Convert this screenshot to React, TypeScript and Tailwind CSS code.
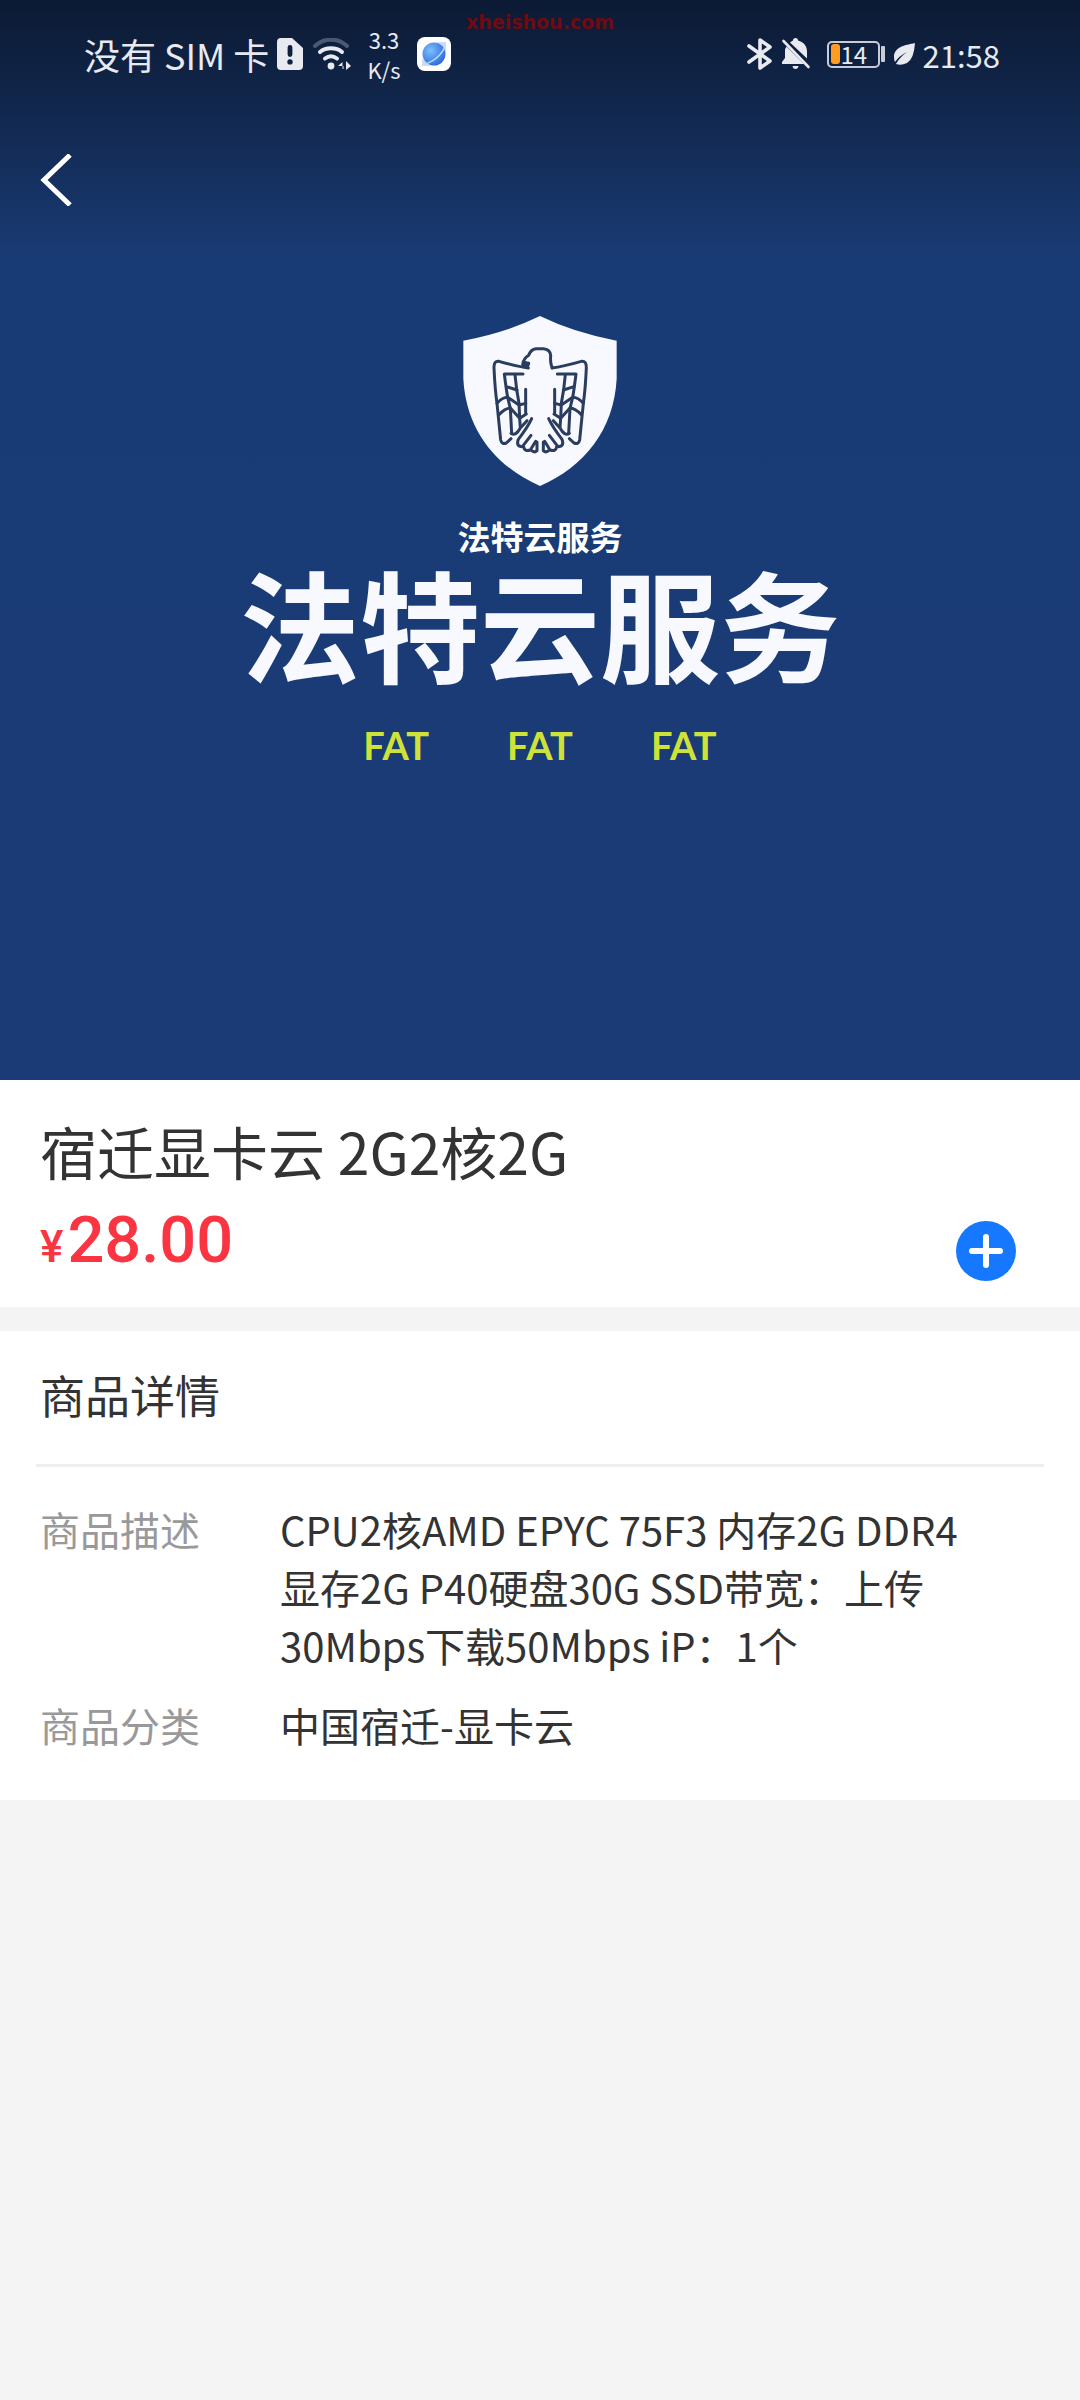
import { useState } from 'react';

const details = [
  { label: '商品描述', value: 'CPU2核AMD EPYC 75F3 内存2G DDR4 显存2G P40硬盘30G SSD带宽：上传30Mbps下载50Mbps iP：1个' },
  { label: '商品分类', value: '中国宿迁-显卡云' },
];

function SimIcon() {
  return (
    <svg className="h-8 w-[26px]" viewBox="0 0 26 32" fill="#e8eaf0">
      <path fillRule="evenodd" d="M4 0h11l11 10v18a4 4 0 0 1-4 4H4a4 4 0 0 1-4-4V4a4 4 0 0 1 4-4ZM13 7a2.4 2.4 0 0 0-2.4 2.4v7.200a2.400 2.400 0 0 0 4.800 0V9.400A2.400 2.400 0 0 0 13 7Zm0 14.200a2.700 2.700 0 1 0 0 5.400 2.700 2.700 0 0 0 0-5.400Z" />
    </svg>
  );
}

function WifiIcon() {
  return (
    <svg className="h-8 w-[38px]" viewBox="0 0 38 32" fill="none" strokeWidth="4" strokeLinecap="round">
      <path d="M2 8C11-.5 25-.5 34 8" stroke="#4b5875" />
      <path d="M7 14c6-5 16-5 22 0M12 20.500c4-3 8-3 12 0" stroke="#e8eaf0" />
      <circle cx="18" cy="28" r="3.400" fill="#e8eaf0" />
      <path d="M25 28l4.500-4v7h1v-3H25ZM33 23l5 5-5 4Z" fill="#e8eaf0" />
    </svg>
  );
}

function BrowserIcon() {
  return (
    <svg className="h-[34px] w-[34px]" viewBox="0 0 34 34">
      <defs>
        <radialGradient id="planet" cx=".35" cy=".35" r=".75">
          <stop offset="0" stopColor="#7cc0fb" />
          <stop offset="1" stopColor="#2764dc" />
        </radialGradient>
      </defs>
      <rect width="34" height="34" rx="8" fill="#fff" />
      <path d="M20 5h9v9ZM5 21v8h8Z" fill="#cfdcf8" />
      <circle cx="17" cy="17" r="11.500" fill="url(#planet)" />
      <path d="M28 7c0 7-9 17-20 20" fill="none" stroke="#b9dcff" strokeWidth="1.500" />
    </svg>
  );
}

function BluetoothIcon() {
  return (
    <svg className="h-8 w-[26px]" viewBox="0 0 26 32" fill="none" stroke="#e8eaf0" strokeWidth="3.600" strokeLinecap="round" strokeLinejoin="round">
      <path d="M2 8l21 15-10 7V2l10 7L2 24" />
    </svg>
  );
}

function MutedIcon() {
  return (
    <svg className="h-8 w-[30px]" viewBox="0 0 30 32" fill="#e8eaf0">
      <path d="M12 2.500a2.500 2.500 0 0 1 5 0c6 1.500 9 6 9 11v7L9 4.500q1.300-1.200 3-2ZM5.500 8.500L23 26H1v-2l3-4v-7q0-2.500 1.500-4.500ZM11.500 28h6q-.5 3-3 3t-3-3Z" />
      <path d="M2.500 3l25 26" stroke="#e8eaf0" strokeWidth="2.600" strokeLinecap="round" />
    </svg>
  );
}

function LeafIcon() {
  return (
    <svg className="h-6 w-[22px]" viewBox="0 0 22 24">
      <path d="M22 1C12 3 1 5 1 15q0 3 1 5Q6 14 14 10 7 15 3 22 8 24 14 21 21 17 22 1Z" fill="#e8eaf0" />
    </svg>
  );
}

function Battery() {
  return (
    <div className="flex items-center gap-px">
      <div className="flex h-[27px] w-[53px] items-center gap-px rounded-[5px] border-2 border-[#c9ccd5] px-0.5 text-2xl leading-none">
        <span className="h-5 w-[9px] shrink-0 rounded-[3px] bg-[#ff9d23]" />
        <span>14</span>
      </div>
      <span className="h-4 w-1 rounded-[1px] bg-[#c9ccd5]" />
    </div>
  );
}

function StatusBar() {
  return (
    <div className="flex h-[108px] items-center justify-between pr-20 pl-[84px] text-[#e8eaf0]">
      <div className="flex items-center">
        <span className="text-[36px] leading-none">没有 SIM 卡</span>
        <span className="ml-2 flex items-center gap-[10px]">
          <SimIcon />
          <WifiIcon />
        </span>
        <span className="mx-4 flex flex-col items-center text-[22px] leading-[30px]">
          <span>3.3</span>
          <span>K/s</span>
        </span>
        <BrowserIcon />
      </div>
      <div className="flex items-center gap-2">
        <BluetoothIcon />
        <MutedIcon />
        <span className="ml-2">
          <Battery />
        </span>
        <LeafIcon />
        <span className="text-[31px] leading-none">21:58</span>
      </div>
    </div>
  );
}

// One half of the eagle, drawn twice and mirrored
function Wing() {
  return (
    <g transform="translate(135 120)">
      <path d="M128 84Q96 80 40 64Q24 62 25 84Q28 150 34 190L45 300Q48 314 62 309L76 296" />
      <path d="M112 102H56Q62 150 66 172L74 205L78 280M88 104Q92 150 100 190L102 235L104 262M120 148V218" />
      <path d="M62 140L94 150M34 190Q50 172 66 172L100 195L120 190M40 224Q58 205 74 204L102 235L122 222" />
      <path d="M76 280Q90 290 104 264L124 242" />
      <path d="M138 236Q126 262 98 298Q90 320 110 320L136 286M114 320Q116 336 134 330L150 304M136 330Q146 340 154 332V306" />
    </g>
  );
}

function ShieldLogo() {
  return (
    <svg className="h-[170px] w-[154px]" viewBox="67 48 462 510" role="img" aria-label="法特云服务">
      <path d="M298 48Q400 98 528 122V236C520 390 430 500 298 558C166 500 76 390 68 236V122Q196 98 298 48Z" fill="#f7f9ff" />
      <g fill="none" stroke="#2b3d5e" strokeWidth="9" strokeLinecap="round" strokeLinejoin="round">
        <Wing />
        <g transform="matrix(-1 0 0 1 597 0)">
          <Wing />
        </g>
        <path d="M335 203Q328 190 330 166Q328 147 308 146H286Q270 148 264 166Q248 176 246 194L264 190" />
        <path d="M248 186l16 4-4 12Z" fill="#2b3d5e" />
      </g>
    </svg>
  );
}

function Hero() {
  return (
    <header className="relative aspect-square w-full bg-[#193b75] bg-linear-to-b from-[#0c1a33] via-[#193b75] via-[24%] to-[#1b3b77] text-white">
      <span className="absolute inset-x-0 top-2 text-center font-['DejaVu_Sans'] text-[19px] leading-7 font-bold text-[#6f0a12]">
        xheishou.com
      </span>
      <StatusBar />
      <div className="flex h-36 items-center px-10">
        <button type="button" aria-label="返回">
          <svg className="h-[52px] w-8" viewBox="0 0 32 52" fill="none" stroke="#fff" strokeWidth="5">
            <path d="M30 1L4 26l26 25" />
          </svg>
        </button>
      </div>
      <div className="flex flex-col items-center pt-16">
        <ShieldLogo />
        <p className="mt-8 text-[33px] leading-9 font-bold">法特云服务</p>
        <h2 className="mt-2 text-[120px] leading-[120px] font-bold text-[#f7f9ff]">法特云服务</h2>
        <p className="mt-10 flex gap-[78px] font-['Lato'] text-[38px] leading-[46px] font-bold text-[#cfe23a]">
          <span>FAT</span>
          <span>FAT</span>
          <span>FAT</span>
        </p>
      </div>
    </header>
  );
}

export default function App() {
  const [count, setCount] = useState(0);

  return (
    <div className="min-h-screen bg-[#f4f4f4] font-['Noto_Sans_CJK_SC',sans-serif] text-[#333]">
      <Hero />

      {/* Title and price */}
      <section className="bg-white px-10 pt-9 pb-[26px]">
        <h1 className="text-[57px] leading-[68px]">宿迁显卡云 2G2核2G</h1>
        <div className="flex items-end justify-between pt-4 pr-6">
          <p className="font-['Roboto'] font-medium text-[#fb3442]">
            <span className="mr-1 text-[44px]">¥</span>
            <span className="text-[65px] leading-[81px]">28.00</span>
          </p>
          <button
            type="button"
            aria-label="加入购物车"
            data-count={count}
            onClick={() => setCount(count + 1)}
            className="flex size-15 items-center justify-center rounded-full bg-[#1677ff]"
          >
            <svg className="size-9" viewBox="0 0 36 36" stroke="#fff" strokeWidth="6" strokeLinecap="round">
              <path d="M18 4v28M4 18h28" />
            </svg>
          </button>
        </div>
      </section>

      {/* Product details */}
      <section className="mt-6 bg-white px-9 pb-[46px]">
        <h2 className="border-b-[3px] border-[#eee] px-1 pt-[34px] pb-[39px] text-[45px] leading-[60px]">商品详情</h2>
        <dl className="flex flex-col gap-[22px] px-1 pt-[33px] text-[40px] leading-[58px]">
          {details.map((item) => (
            <div key={item.label} className="flex">
              <dt className="w-60 shrink-0 text-[#999]">{item.label}</dt>
              <dd className="pr-[60px]">{item.value}</dd>
            </div>
          ))}
        </dl>
      </section>
    </div>
  );
}
